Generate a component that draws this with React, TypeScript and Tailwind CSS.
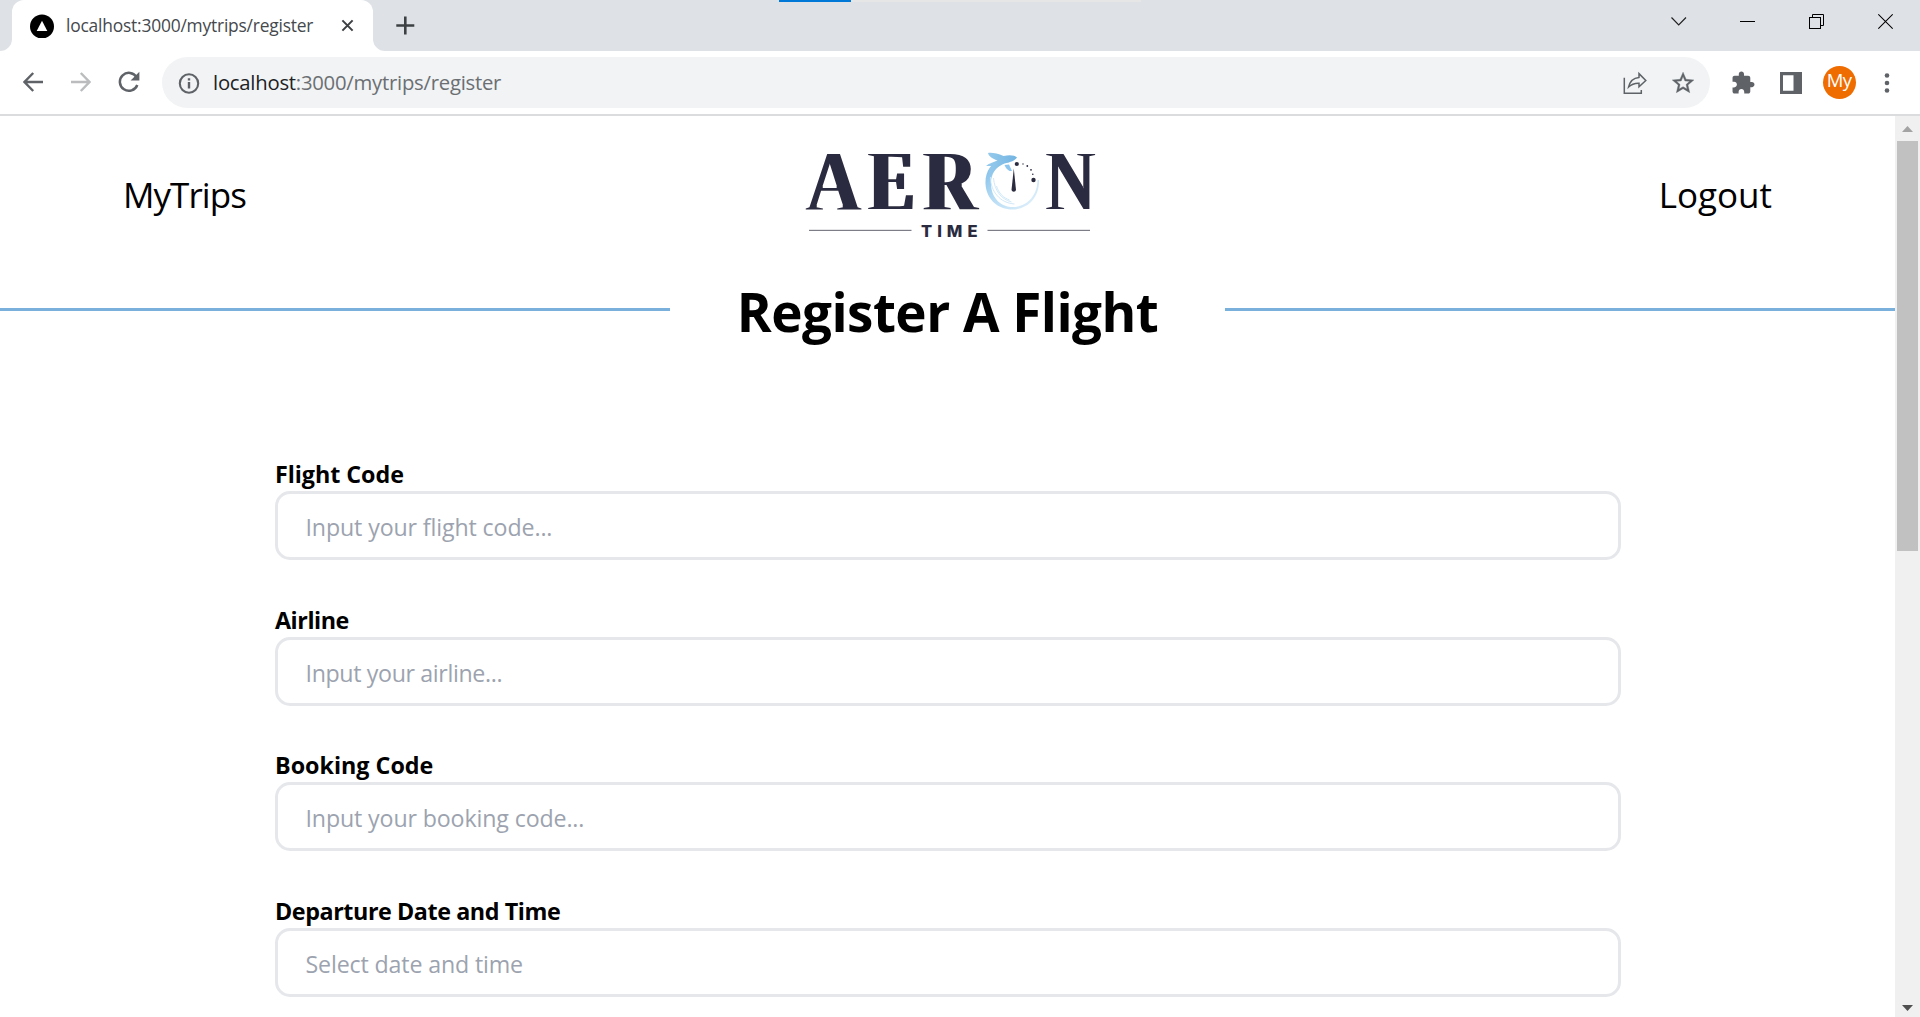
import React from "react";

type Field = { label: string; placeholder: string; labelClass: string; inputClass: string };

const fields: Field[] = [
  { label: "Flight Code", placeholder: "Input your flight code...", labelClass: "tracking-[-0.05px]", inputClass: "tracking-[-0.12px]" },
  { label: "Airline", placeholder: "Input your airline...", labelClass: "tracking-[-0.45px]", inputClass: "tracking-[-0.35px]" },
  { label: "Booking Code", placeholder: "Input your booking code...", labelClass: "tracking-[0px]", inputClass: "tracking-[-0.13px]" },
  { label: "Departure Date and Time", placeholder: "Select date and time", labelClass: "tracking-[-0.42px]", inputClass: "tracking-[-0.14px]" },
];

function TabStrip() {
  return (
    <div className="relative flex h-[51px] shrink-0 bg-[#dee1e6]">
      <div className="absolute left-[779px] top-0 flex h-[2px] w-[362px] bg-[#e6e6e6]">
        <div className="w-[72px] bg-[#0078d7]" />
      </div>
      <svg className="mt-auto h-3 w-3" viewBox="0 0 12 12">
        <path d="M12 0V12H0A12 12 0 0 0 12 0Z" fill="#fff" />
      </svg>
      <div className="flex h-full w-[361px] items-center rounded-t-xl bg-white pl-[18px]">
        <svg className="h-6 w-6" viewBox="0 0 24 24">
          <circle cx="12" cy="12.5" r="12" fill="#000" />
          <path d="M12 6.8 17.3 17H6.7Z" fill="#fff" />
        </svg>
        <span className="ml-3 w-[275px] whitespace-nowrap text-[17.4px] tracking-[-0.2px] text-[#45494d]">localhost:3000/mytrips/register</span>
        <svg className="h-[13px] w-[13px]" viewBox="0 0 14 14" stroke="#3c4043" strokeWidth="2.2">
          <path d="M1.5 1.5 12.5 12.5M12.5 1.5 1.5 12.5" />
        </svg>
      </div>
      <svg className="mt-auto h-3 w-3" viewBox="0 0 12 12">
        <path d="M0 0V12H12A12 12 0 0 1 0 0Z" fill="#fff" />
      </svg>
      <svg className="ml-[11px] mt-4 h-[19px] w-[19px]" viewBox="0 0 19 19" stroke="#3c4043" strokeWidth="2.6">
        <path d="M9.3 0.5V18.5M0.3 9.5H18.3" />
      </svg>
      <div className="ml-auto mr-[27px] flex gap-[54px] pt-[13px]">
        <svg className="-mr-px h-[17px] w-[17px]" viewBox="0 0 17 17" fill="none" stroke="#222" strokeWidth="1.2">
          <path d="M1.5 4.5 8.7 12 16 4.5" />
        </svg>
        <svg className="h-[17px] w-[15px]" viewBox="0 0 15 17">
          <rect y="8" width="15" height="1" fill="#000" />
        </svg>
        <svg className="h-[17px] w-[15px]" viewBox="0 0 15 17" fill="none" stroke="#000">
          <rect x="0.5" y="4.5" width="11" height="11" />
          <path d="M3.5 4.5V1.5H14.5V12.5H11.5" />
        </svg>
        <svg className="h-[17px] w-[15px]" viewBox="0 0 15 17" stroke="#000" strokeWidth="1.2">
          <path d="M0.3 1.3 14.7 15.7M14.7 1.3 0.3 15.7" />
        </svg>
      </div>
    </div>
  );
}

function Toolbar() {
  return (
    <div className="flex h-[65px] shrink-0 border-b-2 border-[#dadcde] bg-white pt-[6px] text-[#5f6368]">
      <div className="flex h-[51px] w-[162px] items-center gap-[28px] pb-px pl-[22.5px]">
        <svg className="h-5 w-5" viewBox="0 0 20 20" fill="none" stroke="#5f6368" strokeWidth="2.4">
          <path d="M20 10H1.8M10.2 1 1.5 10 10.2 19" />
        </svg>
        <svg className="h-5 w-5" viewBox="0 0 20 20" fill="none" stroke="#babcbe" strokeWidth="2.4">
          <path d="M0 10H18.2M9.8 1 18.5 10 9.8 19" />
        </svg>
        <svg className="-ml-px h-[22px] w-[22px]" viewBox="0 0 22 22" fill="none">
          <path d="M18.6 6.2A9 9 0 1 0 19.3 14" stroke="#5f6368" strokeWidth="2.5" />
          <path d="M21.4 0.8V9.6H12.6Z" fill="#5f6368" />
        </svg>
      </div>
      <div className="flex h-[51px] w-[1548px] items-center rounded-full bg-[#f1f3f4] pl-[16px]">
        <svg className="h-[22px] w-[22px]" viewBox="0 0 22 22" fill="none">
          <circle cx="11" cy="11.5" r="9.2" stroke="#5f6368" strokeWidth="2.1" />
          <path d="M11 10V16.6M11 6.2V8.5" stroke="#5f6368" strokeWidth="2.4" />
        </svg>
        <div className="ml-[13px] whitespace-nowrap text-[20.3px] tracking-[-0.24px] text-[#6b6f73]">
          <span className="text-[#202124]">localhost</span>:3000/mytrips/register
        </div>
        <svg className="ml-auto h-[24px] w-[25px]" viewBox="0 0 25 24" fill="none" stroke="#5f6368" strokeWidth="1.5">
          <path d="M1.3 6.8V22.2H18.3V19" />
          <path d="M16 2.6 22.8 9.5 16 15.8V12.2C11.5 12 8.5 13.2 5.6 16C6.8 10.5 10.3 6.9 16 6.4Z" />
        </svg>
        <svg className="ml-[23px] mr-[15px] h-6 w-6" viewBox="0 0 24 24" fill="#5f6368">
          <path d="M22 9.24l-7.19-.62L12 2 9.19 8.63 2 9.24l5.46 4.73L5.82 21 12 17.27 18.18 21l-1.63-7.03L22 9.24zM12 15.4l-3.76 2.27 1-4.28-3.32-2.88 4.38-.38L12 6.1l1.71 4.04 4.38.38-3.32 2.88 1 4.28L12 15.4z" transform="translate(-0.9 -1) scale(1.08)" stroke="#5f6368" strokeWidth="0.35" />
        </svg>
      </div>
      <div className="flex h-[51px] flex-1 items-center">
        <svg className="ml-[22px] h-[23px] w-[23px]" viewBox="1.5 0.5 22 22" fill="#5f6368">
          <path d="M20.5 11H19V7c0-1.1-.9-2-2-2h-4V3.5C13 2.12 11.88 1 10.5 1S8 2.12 8 3.5V5H4c-1.1 0-1.99.9-1.99 2v3.8H3.5c1.49 0 2.7 1.21 2.7 2.7s-1.21 2.7-2.7 2.7H2V20c0 1.1.9 2 2 2h3.8v-1.5c0-1.49 1.21-2.7 2.7-2.7 1.49 0 2.7 1.21 2.7 2.7V22H17c1.1 0 2-.9 2-2v-4h1.5c1.38 0 2.5-1.12 2.5-2.5S21.88 11 20.5 11z" />
        </svg>
        <svg className="ml-[25px] h-[22px] w-[22px]" viewBox="0 0 22 22">
          <path fillRule="evenodd" d="M0 0H22V22H0ZM3 3.2V18.8H13.5V3.2Z" fill="#5f6368" />
        </svg>
        <div className="ml-[21px] flex h-[33px] w-[33px] items-center justify-center rounded-full bg-[#ef6c00] pb-[4px] pr-px text-[18.5px] leading-none tracking-[-0.6px] text-white">My</div>
        <svg className="ml-7 h-5 w-[6px]" viewBox="0 0 6 20" fill="#5f6368">
          <circle cx="3" cy="2.5" r="2.3" />
          <circle cx="3" cy="10" r="2.3" />
          <circle cx="3" cy="17.5" r="2.3" />
        </svg>
      </div>
    </div>
  );
}

function Logo() {
  return (
    <svg className="h-[120px] w-[340px]" viewBox="777.5 136 340 120" fill="#2b2b3f">
      <defs>
        <linearGradient id="ring" x1="0" y1="0" x2="1" y2="1">
          <stop offset="0" stopColor="#74b8e6" />
          <stop offset="0.45" stopColor="#b5dbf4" />
          <stop offset="1" stopColor="#e6f3fc" />
        </linearGradient>
        <linearGradient id="plane" x1="0" y1="0" x2="1" y2="0">
          <stop offset="0" stopColor="#98cbed" />
          <stop offset="1" stopColor="#72b4e2" />
        </linearGradient>
        <filter id="thin" x="-10%" y="-10%" width="120%" height="120%">
          <feMorphology operator="erode" radius="0 1" />
          <feMorphology operator="dilate" radius="1 0" />
        </filter>
        <filter id="heavy" x="-10%" y="-10%" width="120%" height="120%">
          <feMorphology operator="erode" radius="0 1" />
          <feMorphology operator="dilate" radius="2 0" />
        </filter>
      </defs>
      <g fontFamily="'Liberation Serif', serif" fontWeight="700" fontSize="87.5">
        <text x="805.5" y="210.3" textLength="55" lengthAdjust="spacingAndGlyphs" filter="url(#thin)">A</text>
        <g filter="url(#heavy)">
          <text x="868.5" y="210.3" textLength="45.5" lengthAdjust="spacingAndGlyphs">E</text>
          <text x="923.5" y="210.3" textLength="52.5" lengthAdjust="spacingAndGlyphs">R</text>
        </g>
        <text x="1045.5" y="210.3" textLength="49" lengthAdjust="spacingAndGlyphs" filter="url(#thin)">N</text>
      </g>
      <path fill="url(#ring)" d="M1004 158C990 162 984.5 172 985 184C986 200 998 209.5 1012 209.5C1027 209.5 1039 198 1038.5 180L1037 180C1037 196 1026 207 1012.5 207C1001 207 991 199 990.5 184C990 175 995 167 1003 163Z" />
      <g fill="none" stroke="#cbe5f6" strokeWidth="0.9">
        <path d="M990 177C990 192 1000 203 1014 204" />
        <path d="M993 178C994 190 1000 199 1011 202" />
        <path d="M996 186C998 193 1003 198 1009 200" />
      </g>
      <path fill="url(#plane)" d="M987.5 153C991 152.3 997 153.5 1003 156C1009 154.5 1014 155 1016.5 157.5C1014 161 1009 162.5 1004 163.5C998 166 993 170 990 176C988 174 988 169 991 166L985.5 166C988 163.5 993 162 997 160.5C993 159 988.5 157 987.5 153Z" />
      <path fill="#8cc6ee" d="M1004 165 1008.5 164.5 1011.5 171 1009 171C1006.5 169.5 1005 167.5 1004 165Z" />
      <path d="M1013.3 168.5 1015.5 190A2.3 2.3 0 0 1 1011 190Z" />
      <circle cx="1016.3" cy="164" r="2.1" />
      <circle cx="1022.5" cy="164" r="0.7" />
      <circle cx="1026.8" cy="166" r="0.9" />
      <circle cx="1030.5" cy="169.8" r="0.9" />
      <circle cx="1032.3" cy="174.3" r="0.8" />
      <circle cx="1033" cy="180" r="2.2" />
      <rect x="808.5" y="229.8" width="102.5" height="1.2" fill="#7d7d88" />
      <rect x="987" y="229.8" width="102.5" height="1.2" fill="#7d7d88" />
      <text x="920.5" y="236.7" textLength="56.5" fontFamily="Inter, sans-serif" fontWeight="800" fontSize="16.5">TIME</text>
    </svg>
  );
}

function SiteHeader() {
  return (
    <header className="flex h-40 items-center">
      <a className="flex-1 pb-[3px] pl-[123px] text-[35px] leading-none tracking-[-0.95px]">MyTrips</a>
      <Logo />
      <a className="flex-1 pb-[3px] pr-[123px] text-right text-[35px] leading-none">Logout</a>
    </header>
  );
}

function FlightField({ label, placeholder, labelClass, inputClass }: Field) {
  return (
    <div>
      <label className={`flex h-9 items-center pt-[3px] text-[23.3px] font-bold leading-none ${labelClass}`}>{label}</label>
      <input
        readOnly
        placeholder={placeholder}
        className={`block h-[69px] w-full rounded-[15px] border-[3px] border-gray-200 bg-white px-[27.5px] pt-[3px] text-[23.2px] outline-none placeholder:text-[#9ca3af] ${inputClass}`}
      />
    </div>
  );
}

function Scrollbar() {
  return (
    <div className="flex w-[25px] shrink-0 flex-col items-center bg-[#f0f0f0]">
      <svg className="h-[25px] w-[25px] shrink-0" viewBox="0 0 25 25">
        <path d="M12.5 10 18 16H7Z" fill="#a3a3a3" />
      </svg>
      <div className="h-[410px] w-[21px] shrink-0 bg-[#c1c1c1]" />
      <svg className="mt-auto h-[25px] w-[25px] shrink-0" viewBox="0 0 25 25">
        <path d="M7 13H18L12.5 19Z" fill="#505050" />
      </svg>
    </div>
  );
}

export default function App() {
  return (
    <div className="flex h-[1017px] w-[1920px] flex-col overflow-hidden bg-white font-['Open_Sans',sans-serif] text-black">
      <TabStrip />
      <Toolbar />
      <div className="flex min-h-0 flex-1">
        <main className="w-[1895px] overflow-hidden">
          <SiteHeader />
          <div className="flex h-[67px] items-center">
            <div className="h-[3px] w-[670px] bg-[#79b1dc]" />
            <h1 className="flex-1 pt-[3px] text-center text-[53px] font-bold leading-none tracking-[-0.53px]">Register A Flight</h1>
            <div className="h-[3px] w-[670px] bg-[#79b1dc]" />
          </div>
          <form className="mt-28 ml-[275px] flex w-[1346px] flex-col gap-[40.67px]">
            {fields.map((f) => (
              <FlightField key={f.label} {...f} />
            ))}
          </form>
        </main>
        <Scrollbar />
      </div>
    </div>
  );
}
